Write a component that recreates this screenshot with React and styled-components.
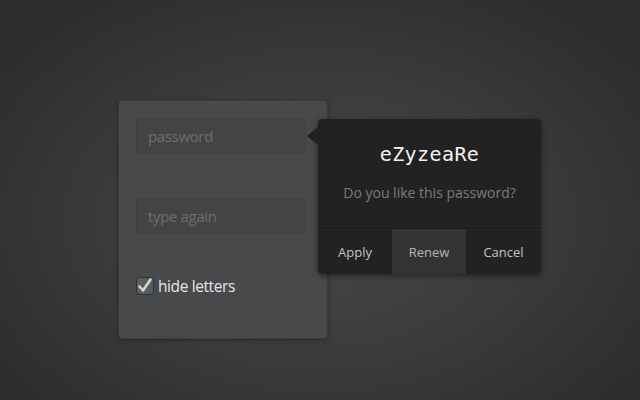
import React from 'react';
import styled, { createGlobalStyle } from 'styled-components';

const GlobalStyle = createGlobalStyle`
  html, body {
    margin: 0;
    padding: 0;
    height: 100%;
  }
  body {
    background: radial-gradient(ellipse 60% 65% at 50% 55%, #47484a 0%, #3a3b3c 55%, #2d2e2f 100%);
    background-color: #2d2e2f;
    font-family: 'Open Sans', 'Noto Sans', sans-serif;
  }
  #root {
    height: 100%;
  }
`;

function CheckIcon() {
  return (
    <svg width="18" height="18" viewBox="0 0 18 18">
      <rect x="0.5" y="0.5" width="17" height="17" rx="3" fill="#5a5b5d" stroke="#2f3031" />
      <path d="M3.5 9.5 L7 13.5 L14.5 2.5" fill="none" stroke="#d4d4d4" strokeWidth="2.6" strokeLinecap="round" strokeLinejoin="round" />
    </svg>
  );
}

function App() {
  return (
    <>
      <GlobalStyle />
      <Stage>
        <Card>
          <FieldWrap>
            <Field placeholder="password" />
            <Popup>
              <Arrow />
              <Generated>eZyzeaRe</Generated>
              <Question>Do you like this password?</Question>
              <Actions>
                <Action>Apply</Action>
                <Action active>Renew</Action>
                <Action>Cancel</Action>
              </Actions>
            </Popup>
          </FieldWrap>
          <FieldWrap>
            <Field placeholder="type again" />
          </FieldWrap>
          <CheckRow>
            <CheckIcon />
            <CheckLabel>hide letters</CheckLabel>
          </CheckRow>
        </Card>
      </Stage>
    </>
  );
}

const Stage = styled.main`
  height: 100%;
  display: flex;
  align-items: flex-start;
  padding: 100px 0 0 118px;
  box-sizing: border-box;
`;

const Card = styled.section`
  width: 210px;
  height: 239px;
  box-sizing: border-box;
  padding: 17px 0 0 17px;
  background: #48494b;
  border: 1px solid #3a3b3d;
  border-radius: 4px;
  box-shadow: 0 1px 4px rgba(0, 0, 0, 0.35);
  display: flex;
  flex-direction: column;
  gap: 44px;
`;

const FieldWrap = styled.div`
  position: relative;
  width: 170px;
`;

const Field = styled.input`
  width: 170px;
  height: 36px;
  box-sizing: border-box;
  padding: 0 11px;
  background: #434446;
  border: 1px solid #3e3f41;
  border-radius: 3px;
  font-family: 'Open Sans', 'Noto Sans', sans-serif;
  font-size: 15px;
  letter-spacing: -0.35px;
  color: #ddd;
  outline: none;
  &::placeholder {
    color: #6c6d6f;
  }
`;

const Popup = styled.div`
  position: absolute;
  left: 182px;
  top: 1px;
  width: 223px;
  height: 155px;
  background: #222222;
  border-radius: 4px;
  box-shadow: 0 2px 6px rgba(0, 0, 0, 0.45);
  display: flex;
  flex-direction: column;
  align-items: center;
`;

const Arrow = styled.span`
  position: absolute;
  left: -11px;
  top: 8px;
  width: 0;
  height: 0;
  border-top: 9px solid transparent;
  border-bottom: 9px solid transparent;
  border-right: 11px solid #222222;
`;

const Generated = styled.div`
  margin-top: 22px;
  font-family: 'DejaVu Sans Mono', 'Liberation Mono', monospace;
  font-size: 20px;
  line-height: 26px;
  color: #f2f2f2;
  letter-spacing: 0.4px;
`;

const Question = styled.div`
  margin-top: 16px;
  font-size: 14px;
  line-height: 20px;
  color: #7b7b7b;
`;

const Actions = styled.div`
  margin-top: auto;
  width: 100%;
  height: 45px;
  display: grid;
  grid-template-columns: 74px 74px 1fr;
  border-top: 1px solid #181818;
  box-shadow: inset 0 1px 0 #2c2c2c;
  border-radius: 0 0 4px 4px;
  overflow: hidden;
`;

const Action = styled.button`
  border: none;
  margin: 0;
  padding: 0;
  background: ${(p) => (p.active ? '#333333' : 'transparent')};
  font-family: 'Open Sans', 'Noto Sans', sans-serif;
  font-size: 13px;
  color: ${(p) => (p.active ? '#b5b5b5' : '#c2c2c2')};
  cursor: pointer;
`;

const CheckRow = styled.label`
  display: flex;
  align-items: center;
  gap: 4px;
  margin-top: -2px;
`;

const CheckLabel = styled.span`
  font-size: 15.5px;
  letter-spacing: -0.4px;
  color: #e6e6e6;
  line-height: 20px;
`;

export default App;
